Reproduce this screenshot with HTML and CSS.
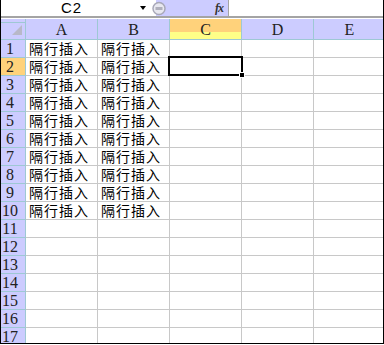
FILE: index.html
```html
<!DOCTYPE html>
<html lang="zh">
<head>
<meta charset="utf-8">
<title>Sheet</title>
<link rel="stylesheet" href="styles.css">
</head>
<body>
<div class="window">
  <div class="toolbar">
    <div class="namebox"><span class="name">C2</span><span class="arrow"></span></div>
    <div class="fxbar">
      <svg class="knob" width="14" height="15" viewBox="0 0 14 15"><circle cx="7" cy="7.5" r="6" fill="#e8e8f0" stroke="#a8a8b8" stroke-width="1.5"/><rect x="3.5" y="6" width="7" height="3" fill="#b0b0bc"/></svg>
      <span class="fx">fx</span>
    </div>
    <div class="formula"></div>
  </div>
  <div class="sheet">
    <div class="hd corner"><svg width="12" height="12" viewBox="0 0 12 12"><polygon points="11,1 11,11 1,11" fill="#b8b8c8"/></svg></div>
    <div class="hd col">A</div><div class="hd col">B</div><div class="hd col sel">C</div><div class="hd col">D</div><div class="hd col">E</div>

    <div class="hd row">1</div><div class="c">隔行插入</div><div class="c">隔行插入</div><div class="c"></div><div class="c"></div><div class="c"></div>
    <div class="hd row sel">2</div><div class="c">隔行插入</div><div class="c">隔行插入</div><div class="c active"><span class="selbox"><span class="handle"></span></span></div><div class="c"></div><div class="c"></div>
    <div class="hd row">3</div><div class="c">隔行插入</div><div class="c">隔行插入</div><div class="c"></div><div class="c"></div><div class="c"></div>
    <div class="hd row">4</div><div class="c">隔行插入</div><div class="c">隔行插入</div><div class="c"></div><div class="c"></div><div class="c"></div>
    <div class="hd row">5</div><div class="c">隔行插入</div><div class="c">隔行插入</div><div class="c"></div><div class="c"></div><div class="c"></div>
    <div class="hd row">6</div><div class="c">隔行插入</div><div class="c">隔行插入</div><div class="c"></div><div class="c"></div><div class="c"></div>
    <div class="hd row">7</div><div class="c">隔行插入</div><div class="c">隔行插入</div><div class="c"></div><div class="c"></div><div class="c"></div>
    <div class="hd row">8</div><div class="c">隔行插入</div><div class="c">隔行插入</div><div class="c"></div><div class="c"></div><div class="c"></div>
    <div class="hd row">9</div><div class="c">隔行插入</div><div class="c">隔行插入</div><div class="c"></div><div class="c"></div><div class="c"></div>
    <div class="hd row">10</div><div class="c">隔行插入</div><div class="c">隔行插入</div><div class="c"></div><div class="c"></div><div class="c"></div>
    <div class="hd row">11</div><div class="c"></div><div class="c"></div><div class="c"></div><div class="c"></div><div class="c"></div>
    <div class="hd row">12</div><div class="c"></div><div class="c"></div><div class="c"></div><div class="c"></div><div class="c"></div>
    <div class="hd row">13</div><div class="c"></div><div class="c"></div><div class="c"></div><div class="c"></div><div class="c"></div>
    <div class="hd row">14</div><div class="c"></div><div class="c"></div><div class="c"></div><div class="c"></div><div class="c"></div>
    <div class="hd row">15</div><div class="c"></div><div class="c"></div><div class="c"></div><div class="c"></div><div class="c"></div>
    <div class="hd row">16</div><div class="c"></div><div class="c"></div><div class="c"></div><div class="c"></div><div class="c"></div>
    <div class="hd row">17</div><div class="c"></div><div class="c"></div><div class="c"></div><div class="c"></div><div class="c"></div>
  </div>
</div>
</body>
</html>
```
FILE: styles.css
```css
* { box-sizing: border-box; }
html, body { margin: 0; padding: 0; background: #fff; }
.window {
  width: 384px;
  height: 344px;
  border-left: 1px solid #000;
  border-right: 1px solid #000;
  border-bottom: 1px solid #000;
  overflow: hidden;
  background: #fff;
}
.toolbar {
  display: flex;
  height: 18px;
  border-bottom: 2px solid #a4a4a4;
  margin-bottom: 1px;
}
.namebox {
  width: 150px;
  display: flex;
  align-items: center;
}
.name {
  flex: 1;
  text-align: center;
  font: 15px "Liberation Sans", Arial, sans-serif;
  letter-spacing: 1px;
  color: #000;
  padding-left: 2px;
  line-height: 16px;
}
.arrow {
  width: 0;
  height: 0;
  border-left: 3px solid transparent;
  border-right: 3px solid transparent;
  border-top: 4px solid #000;
  margin-right: 5px;
}
.fxbar {
  width: 78px;
  display: flex;
  align-items: center;
  justify-content: space-between;
  background: linear-gradient(to right, #fff 0 5px, #ccccff 5px);
  border-right: 1px solid #a4a4a4;
  padding-right: 5px;
}
.knob { display: block; margin-left: 1px; }
.fx {
  font: italic bold 12px "Liberation Serif", "Times New Roman", serif;
  color: #333;
  letter-spacing: -1px;
}
.formula { flex: 1; background: #fff; }

.sheet {
  display: grid;
  grid-template-columns: 25px repeat(5, 72px);
  grid-template-rows: 21px;
  grid-auto-rows: 18px;
}
.hd {
  background: #ccccff;
  border-right: 1px solid #9ec8d4;
  border-bottom: 1px solid #9ec8d4;
  font: 16px "Liberation Serif", "Times New Roman", serif;
  color: #222;
  line-height: 17px;
}
.corner {
  display: flex;
  align-items: flex-end;
  justify-content: flex-end;
  padding: 0 2px 3px 0;
  box-shadow: inset 0 3px 0 #ccccff, inset 0 4px 0 #9ec8d4;
}
.corner svg { display: block; }
.col {
  text-align: center;
  line-height: 22px;
}
.col.sel {
  background: linear-gradient(#ffd27b 0 13px, #ffff88 13px);
}
.row {
  text-align: center;
  padding-right: 6px;
}
.row.sel { background: #ffd27b; }
.c {
  border-right: 1px solid #c8c8c8;
  border-bottom: 1px solid #c8c8c8;
  font: 14px "Noto Sans CJK SC", "Noto Sans", sans-serif;
  letter-spacing: 1px;
  line-height: 17px;
  padding-left: 3px;
  color: #000;
  white-space: nowrap;
}
.active { position: relative; }
.selbox {
  position: absolute;
  top: -2px;
  left: -2px;
  right: -2px;
  bottom: -1px;
  border: 2px solid #000;
  z-index: 2;
}
.handle {
  position: absolute;
  right: -4px;
  bottom: -4px;
  width: 6px;
  height: 6px;
  background: #000;
  border: 1px solid #fff;
}
```
